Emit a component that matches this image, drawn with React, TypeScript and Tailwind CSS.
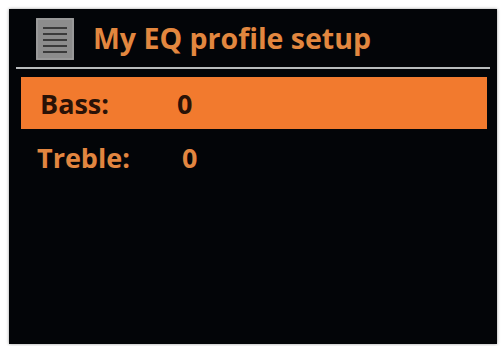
import React from 'react';

const rows = [
  { label: 'Bass:', value: '0', selected: true, pad: 'pl-[19px]', col: 'w-[137px]' },
  { label: 'Treble:', value: '0', selected: false, pad: 'pl-[16px]', col: 'w-[145px]' },
];

const MenuIcon: React.FC = () => (
  <svg width="38" height="42" viewBox="0 0 38 42" className="shrink-0">
    <rect x="0" y="0" width="38" height="42" fill="#8c8c8c" />
    <rect x="1" y="1" width="36" height="40" fill="none" stroke="#a5a5a5" strokeWidth="1" />
    {[9, 15, 21, 27, 33].map(y => (
      <rect key={y} x="7" y={y} width="24" height="2" fill="#3a3a3a" />
    ))}
  </svg>
);

const App: React.FC = () => {
  return (
    <div className="w-[501px] h-[346px] bg-white pt-[9px] pl-[9px]" style={{ fontFamily: '"Open Sans", "Noto Sans", sans-serif' }}>
      <div className="w-[488px] h-[335px] bg-[#030508] flex flex-col shadow-[0_0_3px_rgba(0,0,0,0.4)]">
        {/* Header */}
        <div className="flex items-center gap-[19px] pl-[27px] pt-[7px] h-[52px]">
          <MenuIcon />
          <h1 className="text-[28.5px] font-bold text-[#e2873f] leading-none">My EQ profile setup</h1>
        </div>
        <div className="mx-[7px] mt-[6px] h-[2px] bg-[#b9bcbd]" />

        {/* Settings list */}
        <div className="mt-[8px] flex flex-col gap-[2px]">
          {rows.map(row => (
            <div
              key={row.label}
              className={`flex items-center h-[52px] ml-[12px] mr-[10px] ${row.pad} ${row.selected ? 'bg-[#f27a2e] text-[#2a1207]' : 'text-[#e28640]'}`}
            >
              <span className={`${row.col} text-[27px] font-bold leading-none`}>{row.label}</span>
              <span className="text-[27px] font-bold leading-none">{row.value}</span>
            </div>
          ))}
        </div>
      </div>
    </div>
  );
};

export default App;
